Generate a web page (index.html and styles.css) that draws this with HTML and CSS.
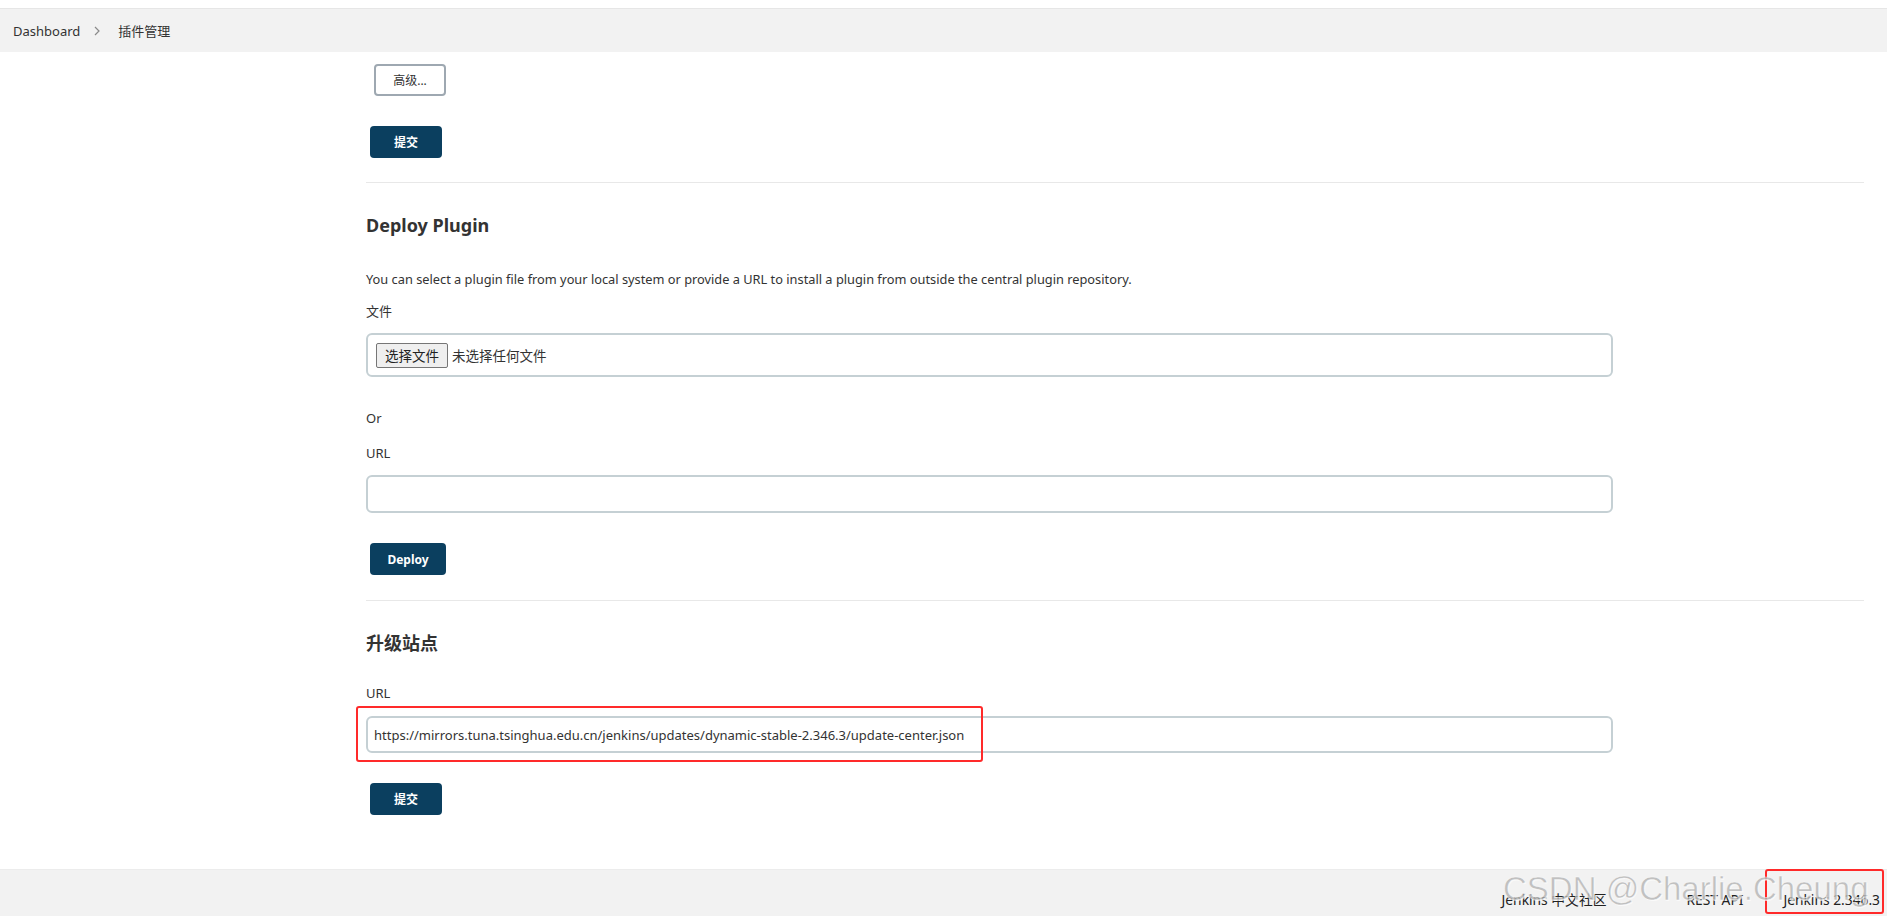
FILE: index.html
```html
<!DOCTYPE html>
<html lang="zh-CN">
<head>
<meta charset="utf-8">
<title>插件管理 [Jenkins]</title>
<link rel="stylesheet" href="styles.css">
</head>
<body>
<div class="breadcrumb-bar">
  <a class="crumb" href="#">Dashboard</a>
  <svg class="chevron" width="8" height="12" viewBox="0 0 8 12"><path d="M2 2l4 4-4 4" fill="none" stroke="#8a8a8a" stroke-width="1.2"/></svg>
  <a class="crumb" href="#">插件管理</a>
</div>

<main class="main-panel">
  <div class="row-advanced"><button class="btn-secondary">高级...</button></div>
  <div class="row-submit"><button class="btn-primary">提交</button></div>

  <hr class="separator">

  <section class="section">
    <h2 class="section-title">Deploy Plugin</h2>
    <p class="description">You can select a plugin file from your local system or provide a URL to install a plugin from outside the central plugin repository.</p>
    <div class="field-label label-file">文件</div>
    <div class="file-box">
      <span class="file-button">选择文件</span>
      <span class="file-name">未选择任何文件</span>
    </div>
    <div class="or-label">Or</div>
    <div class="field-label label-url">URL</div>
    <input class="text-input" type="text" value="">
    <div class="row-deploy"><button class="btn-primary btn-deploy">Deploy</button></div>
  </section>

  <hr class="separator separator-2">

  <section class="section">
    <h2 class="section-title title-cn">升级站点</h2>
    <div class="field-label label-site">URL</div>
    <div class="annotated">
      <input class="text-input site-input" type="text" value="https://mirrors.tuna.tsinghua.edu.cn/jenkins/updates/dynamic-stable-2.346.3/update-center.json">
      <div class="red-mark mark-url"></div>
    </div>
    <div class="row-submit-2"><button class="btn-primary">提交</button></div>
  </section>
</main>

<footer class="page-footer">
  <a class="footer-link link-cn" href="#">Jenkins 中文社区</a>
  <a class="footer-link link-api" href="#">REST API</a>
  <span class="footer-link link-version">Jenkins 2.346.3<span class="red-mark mark-version"></span></span>
  <div class="watermark">CSDN @Charlie.Cheung</div>
</footer>
</body>
</html>
```

FILE: styles.css
```css
html, body {
  margin: 0;
  padding: 0;
  background: #fff;
}

body {
  font-family: "Noto Sans", "Noto Sans CJK SC", sans-serif;
  font-size: 13px;
  color: #333;
  height: 916px;
  display: flex;
  flex-direction: column;
  overflow: hidden;
}

a {
  color: #333;
  text-decoration: none;
}

.breadcrumb-bar {
  margin-top: 8px;
  height: 44px;
  box-sizing: border-box;
  background: #f2f2f2;
  border-top: 1px solid #e6e6e6;
  display: flex;
  align-items: center;
  padding-left: 13px;
  font-size: 13px;
}

.chevron {
  margin: 0 17px 0 13px;
}

.main-panel {
  flex: 1;
  padding: 0 23px 0 366px;
}

.row-advanced {
  margin-top: 12px;
  padding-left: 8px;
  display: flex;
}

.btn-secondary {
  width: 72px;
  height: 32px;
  box-sizing: border-box;
  border: 2px solid #9ea8b1;
  border-radius: 4px;
  background: #fff;
  color: #333;
  font-family: "Noto Sans", "Noto Sans CJK SC", sans-serif;
  font-size: 12px;
  padding: 0;
}

.row-submit {
  margin-top: 30px;
  padding-left: 4px;
  display: flex;
}

.btn-primary {
  width: 72px;
  height: 32px;
  border: none;
  border-radius: 4px;
  background: #0b3f5f;
  color: #fff;
  font-family: "Noto Sans", "Noto Sans CJK SC", sans-serif;
  font-size: 12px;
  font-weight: 700;
  padding: 0;
}

.btn-deploy {
  width: 76px;
}

.separator {
  margin: 24px 0 0 0;
  border: none;
  height: 1px;
  background: #e8e8e8;
}

.separator-2 {
  margin-top: 25px;
}

.section {
  display: flex;
  flex-direction: column;
  align-items: flex-start;
}

.section-title {
  margin: 30px 0 0 0;
  font-size: 18px;
  line-height: 24px;
  font-weight: 700;
  color: #333;
}

.description {
  margin: 32px 0 0 0;
  line-height: 20px;
  font-size: 12.8px;
}

.field-label {
  line-height: 20px;
}

.label-file {
  margin-top: 12px;
}

.file-box {
  margin-top: 12px;
  width: 1247px;
  height: 44px;
  box-sizing: border-box;
  border: 2px solid #c5d0d4;
  border-radius: 6px;
  display: flex;
  align-items: center;
  padding-left: 8px;
}

.file-button {
  width: 72px;
  height: 25px;
  box-sizing: border-box;
  border: 1px solid #767676;
  border-radius: 2px;
  background: #efefef;
  display: flex;
  align-items: center;
  justify-content: center;
  font-size: 13.5px;
  color: #222;
}

.file-name {
  margin-left: 4px;
  font-size: 13.5px;
  color: #333;
}

.or-label {
  margin-top: 31px;
  line-height: 20px;
}

.label-url {
  margin-top: 15px;
}

.text-input {
  margin-top: 12px;
  width: 1247px;
  height: 38px;
  box-sizing: border-box;
  border: 2px solid #c5d0d4;
  border-radius: 6px;
  padding: 0 6px;
  font-family: "Noto Sans", "Noto Sans CJK SC", sans-serif;
  font-size: 13px;
  color: #333;
  background: #fff;
  outline: none;
}

.row-deploy {
  margin-top: 30px;
  padding-left: 4px;
  display: flex;
}

.label-site {
  margin-top: 28px;
}

.annotated {
  position: relative;
  margin-top: 13px;
}

.site-input {
  margin-top: 0;
  height: 37px;
}

.red-mark {
  position: absolute;
  border: 2px solid #ff2a2a;
  border-radius: 3px;
  box-sizing: border-box;
  pointer-events: none;
}

.mark-url {
  left: -10px;
  top: -10px;
  width: 627px;
  height: 56px;
}

.row-submit-2 {
  margin-top: 30px;
  padding-left: 4px;
  display: flex;
}

.page-footer {
  position: relative;
  height: 47px;
  box-sizing: border-box;
  background: #f2f2f2;
  border-top: 1px solid #ececec;
  display: flex;
  justify-content: flex-end;
  align-items: flex-start;
  padding: 22px 7px 0 0;
  font-size: 13.8px;
  line-height: 16px;
}

.footer-link {
  color: #222;
}

.link-api {
  margin-left: 80px;
}

.link-version {
  position: relative;
  margin-left: 40px;
}

.mark-version {
  right: -4px;
  top: -23px;
  width: 119px;
  height: 45px;
}

.watermark {
  position: absolute;
  left: 1503px;
  top: 1px;
  font-family: "Liberation Sans", Arial, sans-serif;
  font-size: 33px;
  line-height: 36px;
  color: rgba(160, 160, 160, 0.65);
  -webkit-text-stroke: 0.5px rgba(255, 255, 255, 0.85);
  text-shadow: 1px 1px 0 rgba(255,255,255,0.6);
  white-space: nowrap;
  pointer-events: none;
}
```
